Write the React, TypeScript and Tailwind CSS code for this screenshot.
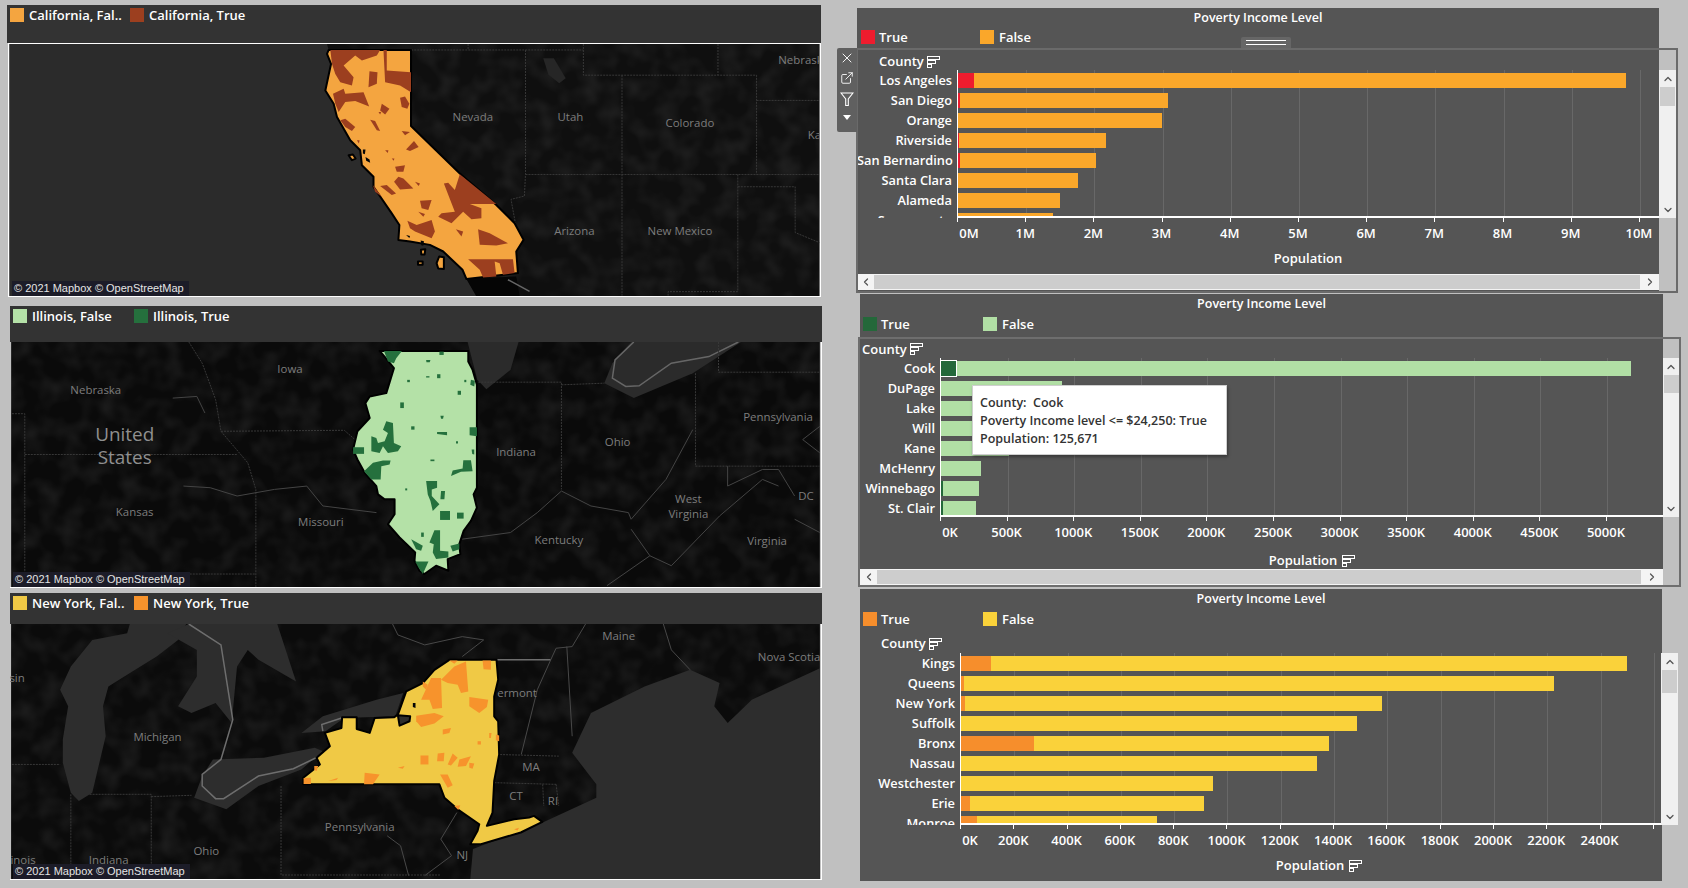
import React from "react";
import { ChevronUp, ChevronDown, ChevronLeft, ChevronRight, X, ExternalLink } from "lucide-react";

const S = "scale(0.5383 0.3333)";
const T = "scale(0.33333)";

function Polys({ items, fill }: { items: string[]; fill: string }) {
  return (
    <>
      {items.map((p, i) => (
        <polygon key={i} points={p} fill={fill} />
      ))}
    </>
  );
}

function Lines({ items, stroke = "#383838", dash = "2 1", w = 1 }: { items: string[]; stroke?: string; dash?: string; w?: number }) {
  return (
    <>
      {items.map((p, i) => (
        <polyline key={i} points={p} fill="none" stroke={stroke} strokeWidth={w} strokeDasharray={dash} vectorEffect="non-scaling-stroke" />
      ))}
    </>
  );
}

function Outline({ p, fill, w = 2 }: { p: string; fill: string; w?: number }) {
  return <polygon points={p} fill={fill} stroke="#000" strokeWidth={w} strokeLinejoin="round" vectorEffect="non-scaling-stroke" />;
}

function L({ x, y, t, big }: { x: number; y: number; t: string; big?: boolean }) {
  return (
    <text x={x} y={y + 1} textAnchor="middle" dominantBaseline="middle" fill={big ? "#8f8f8f" : "#7d7d7d"} fontSize={big ? 19 : 11.5} className="font-['Open_Sans',sans-serif]">
      {t}
    </text>
  );
}

function Mottle({ id, x, y, w, h }: { id: string; x: number; y: number; w: number; h: number }) {
  return (
    <>
      <filter id={id} x="0" y="0" width="100%" height="100%">
        <feTurbulence type="fractalNoise" baseFrequency="0.05" numOctaves="2" seed="7" />
        <feColorMatrix type="matrix" values="0 0 0 0 0.09  0 0 0 0 0.09  0 0 0 0 0.09  1.6 0 0 0 -0.62" />
      </filter>
      <rect x={x} y={y} width={w} height={h} filter={`url(#${id})`} opacity="0.3" />
    </>
  );
}

function Attribution() {
  return (
    <div className="absolute left-[3px] bottom-0 h-[15px] w-[177px] bg-[#1c1c28] text-[#e4e4e4] text-[11px] leading-[15px] pl-[2px] whitespace-nowrap font-['Liberation_Sans',sans-serif]">
      © 2021 Mapbox © OpenStreetMap
    </div>
  );
}

function Legend({ a, b, ca, cb, cls, secondCls }: { a: string; b: string; ca: string; cb: string; cls: string; secondCls: string }) {
  return (
    <div className={`flex items-start text-white font-semibold text-[13px] leading-[14px] ${cls}`}>
      <span className={`w-[14px] h-[14px] ${ca}`} />
      <span className={`ml-[5px] ${secondCls}`}>{a}</span>
      <span className={`w-[14px] h-[14px] ${cb}`} />
      <span className="ml-[5px]">{b}</span>
    </div>
  );
}

function CaliforniaMap() {
  return (
    <svg viewBox="8 44 813 253" className="block w-full h-full">
      <rect x="8" y="44" width="813" height="253" fill="#0f0f0f" />
      <Mottle id="m1" x={8} y={44} w={813} h={253} />
      <g transform={S}>
        <polygon points="1010,175 1030,175 1052,235 1040,250 1020,225" fill="#262626" />
        <Lines items={["764,150 1085,150", "870,132 870,150", "977,150 977,525 975,590 950,600 958,670", "1085,132 1085,226 1408,226 1408,525", "1336,132 1336,226", "1157,226 1157,890", "977,525 1525,525", "1373,525 1373,878 1243,878 1243,890", "1373,562 1480,562 1480,700 1525,730", "1408,302 1525,302"]} />
      </g>
      <g transform={`translate(320 44) ${T}`}>
        <polygon points="-936,0 20,0 25,18 20,30 32,60 15,140 40,180 50,220 90,290 120,320 125,365 160,400 160,430 215,510 238,545 235,590 270,595 330,605 370,625 428,680 440,708 470,760 -936,760" fill="#2b2b2b" />
        <polygon points="440,708 590,700 600,760 470,760" fill="#050505" />
        <polyline points="565,710 630,745" fill="none" stroke="#666" strokeWidth={1.5} vectorEffect="non-scaling-stroke" />
        <Outline p="25,18 273,18 273,247 420,390 530,485 585,540 612,590 590,625 595,690 440,708 428,680 370,625 330,605 270,595 235,590 238,545 215,510 160,430 160,400 125,365 120,320 90,290 50,220 40,180 15,140 32,60 20,30" fill="#f4a540" />
        <Outline p="85,335 98,333 106,345 95,350" fill="#f4a540" />
        <Outline p="303,620 316,618 314,634 304,634" fill="#f4a540" />
        <Outline p="294,655 308,655 308,665 294,665" fill="#f4a540" />
        <Outline p="358,640 372,642 372,678 355,676 350,660" fill="#f4a540" />
        <Polys fill="#050505" items={["128,318 136,318 134,332 128,330", "136,340 148,348 150,358 138,352", "258,575 270,578 268,584", "302,592 312,594 310,608 304,606"]} />
        <Polys
          fill="#9c3f1f"
          items={[
            "30,18 180,18 170,35 125,50 105,35 70,65 100,100 95,125 60,115 45,90 35,60",
            "190,18 200,18 200,80 273,85 273,145 240,125 195,115",
            "148,82 172,85 170,120 145,130",
            "38,150 70,135 75,150 130,145 147,188 105,172 75,175 55,205 45,180",
            "240,162 255,158 268,180 262,195 245,190",
            "185,180 208,195 195,212 180,200",
            "60,230 75,225 105,250 95,262 75,250",
            "150,228 165,232 180,262 170,260",
            "245,262 270,265 255,275",
            "282,292 296,310 270,322 258,318",
            "225,370 255,365 250,385 230,385",
            "235,400 250,405 280,435 240,438 222,415",
            "180,428 200,425 228,450 215,455",
            "300,472 335,470 325,500 305,495",
            "295,505 315,512 310,520",
            "420,392 530,482 450,482 485,495 485,525 455,528 430,505 395,540 355,520 365,510 405,505 395,480 372,420 385,418 405,440",
            "262,532 290,545 335,530 345,565 335,585 285,565 270,555",
            "475,558 510,570 565,600 530,607 480,605",
            "445,648 580,648 585,690 550,695 540,660 525,655 530,700 490,703 480,680",
            "408,558 430,565 425,580",
            "158,425 185,460 165,445",
            "110,290 118,290 116,300",
            "175,205 183,205 180,212",
            "195,320 205,320 203,328",
            "215,345 223,345 221,352",
            "285,415 300,420 296,428",
          ]}
        />
      </g>
      <L x={473} y={117} t="Nevada" />
      <L x={571} y={117} t="Utah" />
      <L x={691} y={123} t="Colorado" />
      <L x={802} y={60} t="Nebrask" />
      <L x={816} y={135} t="Ka" />
      <L x={575} y={232} t="Arizona" />
      <L x={681} y={232} t="New Mexico" />
    </svg>
  );
}

function IllinoisMap() {
  return (
    <svg viewBox="10 342 812 246" className="block w-full h-full">
      <rect x="10" y="342" width="812" height="246" fill="#0a0a0a" />
      <Mottle id="m2" x={10} y={342} w={812} h={246} />
      <g transform={`translate(0 300) ${S}`}>
        <polygon points="870,126 965,126 950,210 905,268 888,240" fill="#2b2b2b" />
        <polygon points="1175,126 1380,126 1290,220 1180,295 1125,250 1140,190" fill="#2b2b2b" />
        <polyline points="1180,126 1145,180 1140,235 1165,260 1190,258 1250,190 1320,170 1375,126" fill="none" stroke="#666" strokeWidth={1.5} vectorEffect="non-scaling-stroke" />
        <Lines items={["20,342 44,342 44,865", "44,465 440,465", "410,395 640,392 660,420", "350,126 375,190 400,300 410,395 460,490 475,570 475,865", "44,825 475,825", "890,247 1045,247 1045,570", "1045,255 1125,250", "1295,220 1295,500", "1338,126 1338,217 1527,217", "1295,500 1527,500"]} />
        <Lines dash="none" stroke="#444" items={["860,720 950,700 1000,640 1045,575 1100,620 1170,640 1175,660 1240,540 1290,390", "1175,690 1210,770 1130,860", "1210,770 1250,800 1340,650 1420,540 1450,560", "1355,500 1355,560 1420,510 1450,510 1480,590", "1527,380 1495,420 1527,460", "1480,660 1527,700", "320,295 365,290 380,340", "340,560 390,565 440,590 510,570 570,560 600,620 700,640"]} />
      </g>
      <g transform={`translate(345 345) ${T}`}>
        <Outline p="105,18 372,18 372,50 385,75 398,120 398,430 388,450 398,490 380,530 358,560 345,600 348,630 310,645 312,680 275,665 240,690 225,680 210,650 212,625 165,580 130,540 150,510 150,465 120,465 100,450 95,425 60,385 38,345 25,315 38,260 75,220 62,175 75,155 125,145 148,70 128,45" fill="#b4e1a7" />
        <Polys
          fill="#25703d"
          items={[
            "118,18 172,18 155,40 148,55 130,50",
            "285,20 298,20 298,30 285,30",
            "167,173 178,173 178,190 167,190",
            "125,230 145,235 148,295 170,305 160,320 130,325 115,305 105,325 80,320 80,275 95,280 100,295 120,290 130,265 115,255",
            "25,308 58,308 58,328 25,328",
            "85,355 115,348 138,348 135,360 110,365 108,405 80,405 58,380",
            "376,248 398,248 398,275 376,272",
            "278,262 308,262 308,272 278,268",
            "357,347 380,347 385,380 350,382 320,395 325,378 355,372",
            "245,410 278,410 278,430 262,435 262,455 285,480 265,500 258,470 250,450",
            "290,440 302,440 300,465 288,465",
            "287,500 317,500 317,527 287,527",
            "338,505 358,505 358,523 338,523",
            "270,558 287,558 287,620 312,622 312,640 275,645 265,625 268,600 255,595",
            "200,585 235,605 230,620 215,615",
            "318,605 345,598 345,615 325,622",
            "212,652 252,652 235,690 222,670",
            "340,138 350,138 350,150 340,150",
            "278,88 288,88 288,100 278,100",
            "245,94 255,94 255,98 245,98",
            "200,245 210,245 210,255 200,255",
            "288,213 298,213 296,222 290,222",
            "382,315 390,315 390,330 384,328",
            "258,345 270,345 270,350 258,350",
            "380,105 392,108 390,125 378,120",
            "360,105 366,105 366,112 360,112",
            "245,45 258,45 256,52 246,52",
            "188,105 196,105 196,112 188,112",
            "335,290 341,290 341,297 335,297",
            "182,432 188,432 188,438 182,438",
            "230,565 238,565 238,578 230,578",
          ]}
        />
      </g>
      <L x={290} y={369} t="Iowa" />
      <L x={95} y={390} t="Nebraska" />
      <L x={124} y={435} t="United" big />
      <L x={124} y={458} t="States" big />
      <L x={134} y={513} t="Kansas" />
      <L x={321} y={523} t="Missouri" />
      <L x={517} y={452} t="Indiana" />
      <L x={619} y={442} t="Ohio" />
      <L x={780} y={417} t="Pennsylvania" />
      <L x={690} y={500} t="West" />
      <L x={690} y={515} t="Virginia" />
      <L x={560} y={541} t="Kentucky" />
      <L x={769} y={542} t="Virginia" />
      <L x={808} y={497} t="DC" />
    </svg>
  );
}

function NewYorkMap() {
  return (
    <svg viewBox="10 624 812 256" className="block w-full h-full">
      <rect x="10" y="624" width="812" height="256" fill="#0b0b0b" />
      <Mottle id="m3" x={10} y={624} w={812} h={256} />
      <g transform={`translate(0 590) ${S}`}>
        <Polys
          fill="#2d2d2d"
          items={[
            "875,870 880,780 1010,700 1110,625 1110,585 1065,490 1100,370 1200,290 1285,240 1340,280 1330,350 1355,400 1400,330 1527,235 1527,870",
            "115,520 130,610 145,635 170,610 195,440 190,350 200,290 250,240 290,200 330,150 345,102 240,102 235,130 170,150 130,230 110,300 125,350 115,450",
            "350,102 515,102 550,275 480,210 460,180 440,230 430,400 400,340 355,370 330,350 365,260 365,180 310,130",
            "375,560 395,510 490,505 585,475 600,485 560,540 480,590 420,660 360,625",
            "560,430 600,380 700,330 750,310 735,380 640,385 605,425",
          ]}
        />
        <Lines dash="none" stroke="#6e6e6e" w={1.5} items={["350,102 410,165 432,390 410,510 375,555 375,590 400,628 415,628 480,560 545,538 600,495", "600,425 598,405 635,385", "925,210 1025,210"]} />
        <Lines items={["20,525 110,525", "130,615 130,870", "165,615 280,615 280,870", "280,622 355,618", "522,590 522,858 820,858", "925,495 1040,500", "920,580 1035,585", "1010,585 1012,650", "1035,585 1040,650"]} />
        <Lines dash="none" stroke="#484848" items={["850,670 820,750 840,800 790,860", "1025,210 1000,300 970,495", "1055,170 1065,440", "730,102 740,135 790,165 860,140 900,150 860,200", "1025,210 1035,175 1065,170 1090,102", "1235,102 1250,180 1285,240", "720,740 745,770 760,860"]} />
      </g>
      <g transform={`translate(295 650) ${T}`}>
        <Outline p="465,30 607,30 612,90 600,140 600,200 612,215 615,315 600,395 595,490 578,530 660,510 705,505 720,500 745,518 680,550 560,585 528,585 550,545 555,525 490,480 450,445 435,405 25,405 25,385 75,345 65,325 105,290 90,250 140,235 142,203 186,203 186,238 225,250 240,205 298,203 310,195 335,125 385,100 420,60" fill="#f0c945" />
        <Outline p="310,197 347,200 345,215 315,228" fill="#2d2d2d" />
        <polygon points="355,160 363,160 363,175 355,172" fill="#050505" />
        <Polys
          fill="#f7932c"
          items={[
            "465,32 490,32 480,42",
            "565,32 590,32 590,60 568,58",
            "480,50 515,35 522,125 500,130 490,105 460,100 440,90",
            "385,95 400,105 395,120 385,110",
            "410,85 440,85 443,175 415,178 405,150 380,150",
            "525,142 582,150 578,172 555,190 525,170",
            "365,198 420,190 448,200 420,222 380,232 365,215",
            "445,240 470,235 465,250 445,255",
            "378,318 402,318 402,345 378,345",
            "430,312 450,310 448,335 428,335",
            "475,312 490,325 470,348 460,345",
            "495,330 530,320 515,350 490,352",
            "525,340 540,342 535,358 525,355",
            "437,375 460,375 475,408 460,415",
            "210,370 255,375 235,405 208,405",
            "26,386 48,385 48,404 26,404",
            "58,350 70,350 65,365 58,362",
            "480,470 498,468 492,482",
            "605,255 615,258 615,275 605,272",
            "550,275 560,275 560,285 550,285",
            "585,250 592,250 590,265 585,265",
            "100,395 130,385 125,392",
            "310,355 330,350 325,358",
            "660,540 675,536 670,544",
          ]}
        />
      </g>
      <L x={16} y={678} t="sin" />
      <L x={157} y={737} t="Michigan" />
      <L x={620} y={636} t="Maine" />
      <L x={791} y={657} t="Nova Scotia" />
      <L x={518} y={693} t="ermont" />
      <L x={532} y={767} t="MA" />
      <L x={517} y={797} t="CT" />
      <L x={554} y={802} t="RI" />
      <L x={360} y={828} t="Pennsylvania" />
      <L x={206} y={852} t="Ohio" />
      <L x={463} y={856} t="NJ" />
      <L x={108} y={861} t="Indiana" />
      <L x={22} y={861} t="inois" />
    </svg>
  );
}

function SortIcon() {
  return (
    <svg width="13" height="13" viewBox="0 0 13 13" className="flex-none" fill="none" stroke="#fff" strokeWidth="1">
      <rect x="0.5" y="0.5" width="12" height="3" />
      <rect x="0.5" y="4.5" width="8" height="3" />
      <rect x="0.5" y="8.5" width="4" height="3" />
    </svg>
  );
}

function VScroll({ cls, thumb }: { cls: string; thumb: string }) {
  return (
    <div className={`flex-none flex flex-col items-center bg-[#f0f0f0] text-[#555] ${cls}`}>
      <div className="h-[17px] flex items-center">
        <ChevronUp size={12} strokeWidth={2.5} />
      </div>
      <div className={`w-[15px] bg-[#cdcdcd] ${thumb}`} />
      <div className="mt-auto h-[17px] flex items-center">
        <ChevronDown size={12} strokeWidth={2.5} />
      </div>
    </div>
  );
}

function HScroll({ thumb }: { thumb: string }) {
  return (
    <div className="flex h-[16px] items-stretch bg-[#f4f4f4] text-[#555] py-[1px]">
      <div className="w-[17px] flex items-center justify-center">
        <ChevronLeft size={12} strokeWidth={2.5} />
      </div>
      <div className={`bg-[#cdcdcd] ${thumb}`} />
      <div className="flex-1 flex items-center justify-center">
        <ChevronRight size={12} strokeWidth={2.5} />
      </div>
    </div>
  );
}

type Row = { n: string; t: number; e: number; sel?: boolean };

function Chart(props: {
  rows: Row[];
  step: number;
  ticks: string[];
  trueColor: string;
  falseColor: string;
  titleCls: string;
  legendCls: string;
  legendFirst: string;
  countyCls: string;
  plotCls: string;
  labelCls: string;
  axisCls: string;
  axisOffsetCls: string;
  firstTickCls: string;
  popCls: string;
  popIcon?: boolean;
  scrollCls: string;
  thumbCls: string;
}) {
  const { rows, step, ticks } = props;
  return (
    <>
      <div className={`flex items-center justify-center text-white font-semibold text-[12.5px] ${props.titleCls}`}>Poverty Income Level</div>
      <div className={`flex items-start text-white font-semibold text-[13px] leading-[14px] ${props.legendCls}`}>
        <span className={`w-[14px] h-[14px] ${props.trueColor}`} />
        <span className={`ml-[4px] ${props.legendFirst}`}>True</span>
        <span className={`w-[14px] h-[14px] ${props.falseColor}`} />
        <span className="ml-[5px]">False</span>
      </div>
      <div className={`flex items-center gap-[3px] text-white font-semibold text-[13px] ${props.countyCls}`}>
        <span>County</span>
        <SortIcon />
      </div>
      <div className={`flex ${props.plotCls}`}>
        <div className={`flex-none overflow-hidden pt-[3px] text-right text-white font-semibold text-[12.8px] ${props.labelCls}`}>
          {rows.map((r) => (
            <div key={r.n} className="h-[20px] leading-[15px] whitespace-nowrap">
              {r.n}
            </div>
          ))}
        </div>
        <div className="relative flex-1 min-w-0 overflow-hidden border-l border-b-2 border-white pt-[3px]">
          <div className="absolute inset-0 flex">
            {ticks.map((_, i) => (
              <div key={i} className="flex-none border-l border-[#686868] first:border-l-0" style={{ width: step }} />
            ))}
          </div>
          {rows.map((r) => (
            <div key={r.n} className="relative flex h-[15px] mb-[5px]">
              {r.t > 0 && (
                <div className={r.sel ? `${props.trueColor} border border-white -my-[1px] -ml-[1px]` : props.trueColor} style={{ width: r.t }} />
              )}
              <div className={props.falseColor} style={{ width: r.e - r.t }} />
            </div>
          ))}
        </div>
        <VScroll cls={props.scrollCls} thumb={props.thumbCls} />
      </div>
      <div className={`flex text-white font-semibold text-[13px] leading-[17px] ${props.axisCls} ${props.axisOffsetCls}`}>
        {ticks.map((t, i) => (
          <div key={i} className="flex-none" style={{ width: step }}>
            <div className="w-px h-[4px] bg-white" />
            <div className={i === 0 ? `w-0 flex justify-center mt-[3px] ${props.firstTickCls}` : "w-0 flex justify-center mt-[3px]"}>
              <span className="whitespace-nowrap">{t}</span>
            </div>
          </div>
        ))}
      </div>
      <div className={`flex items-center justify-center gap-[5px] text-white font-semibold text-[13px] ${props.popCls}`}>
        <span>Population</span>
        {props.popIcon && <SortIcon />}
      </div>
    </>
  );
}

const caRows: Row[] = [
  { n: "Los Angeles", t: 16, e: 668 },
  { n: "San Diego", t: 2, e: 210 },
  { n: "Orange", t: 0, e: 204 },
  { n: "Riverside", t: 1, e: 148 },
  { n: "San Bernardino", t: 2, e: 138 },
  { n: "Santa Clara", t: 0, e: 120 },
  { n: "Alameda", t: 0, e: 102 },
  { n: "Sacramento", t: 0, e: 95 },
];
const ilRows: Row[] = [
  { n: "Cook", t: 17, e: 691, sel: true },
  { n: "DuPage", t: 0, e: 121 },
  { n: "Lake", t: 0, e: 94 },
  { n: "Will", t: 0, e: 92 },
  { n: "Kane", t: 0, e: 68 },
  { n: "McHenry", t: 0, e: 40 },
  { n: "Winnebago", t: 2, e: 38 },
  { n: "St. Clair", t: 2, e: 35 },
];
const nyRows: Row[] = [
  { n: "Kings", t: 30, e: 666 },
  { n: "Queens", t: 3, e: 593 },
  { n: "New York", t: 4, e: 421 },
  { n: "Suffolk", t: 0, e: 396 },
  { n: "Bronx", t: 73, e: 368 },
  { n: "Nassau", t: 0, e: 356 },
  { n: "Westchester", t: 0, e: 252 },
  { n: "Erie", t: 9, e: 243 },
  { n: "Monroe", t: 16, e: 196 },
];

export default function App() {
  return (
    <div className="w-[1688px] h-[888px] overflow-hidden bg-[#c0c0c0] flex font-['Open_Sans',sans-serif]">
      <div className="w-[830px] flex-none flex flex-col pt-[5px]">
        <div className="ml-[7px] w-[814px] h-[292px] flex flex-col">
          <div className="h-[38px] bg-[#333333]">
            <Legend a="California, Fal.." b="California, True" ca="bg-[#f4a540]" cb="bg-[#9c3f1f]" cls="pt-[3px] pl-[3px]" secondCls="w-[101px]" />
          </div>
          <div className="relative flex-1 ml-[1px] border border-white overflow-hidden">
            <CaliforniaMap />
            <Attribution />
          </div>
        </div>
        <div className="ml-[10px] mt-[9px] w-[812px] h-[282px] flex flex-col">
          <div className="h-[36px] bg-[#333333]">
            <Legend a="Illinois, False" b="Illinois, True" ca="bg-[#b4e1a7]" cb="bg-[#25703d]" cls="pt-[3px] pl-[3px]" secondCls="w-[102px]" />
          </div>
          <div className="relative flex-1 border-b border-r border-white overflow-hidden">
            <IllinoisMap />
            <Attribution />
          </div>
        </div>
        <div className="ml-[10px] mt-[5px] w-[812px] h-[287px] flex flex-col">
          <div className="h-[31px] bg-[#333333]">
            <Legend a="New York, Fal.." b="New York, True" ca="bg-[#f0c945]" cb="bg-[#f7932c]" cls="pt-[3px] pl-[3px]" secondCls="w-[102px]" />
          </div>
          <div className="relative flex-1 border-b border-r border-white overflow-hidden">
            <NewYorkMap />
            <Attribution />
          </div>
        </div>
      </div>

      <div className="flex-1 flex flex-col pt-[8px]">
        <div className="relative ml-[27px] w-[802px] h-[285px] bg-[#555555]">
          <Chart
            rows={caRows}
            step={68.2}
            ticks={["0M", "1M", "2M", "3M", "4M", "5M", "6M", "7M", "8M", "9M", "10M"]}
            trueColor="bg-[#ee1c2e]"
            falseColor="bg-[#faa72a]"
            titleCls="h-[20px]"
            legendCls="h-[22px] pt-[2px] pl-[4px]"
            legendFirst="w-[101px]"
            countyCls="h-[20px] pt-[4px] pl-[22px]"
            plotCls="h-[148px] -mr-[17px]"
            labelCls="w-[100px] pr-[5px]"
            axisCls="h-[29px]"
            axisOffsetCls="pl-[100px]"
            firstTickCls="ml-[12px]"
            popCls="h-[27px] pl-[100px] pb-[3px]"
            scrollCls="w-[17px]"
            thumbCls="h-[19px]"
          />
          <HScroll thumb="w-[766px]" />
          <div className="absolute -left-[1px] top-[40px] w-[822px] h-[245px] border-2 border-[#6a6a6a] pointer-events-none" />
          <div className="absolute -left-[20px] top-[40px] w-[20px] h-[84px] bg-[#606060] rounded-l-[2px] flex flex-col items-center text-white">
            <X size={16} strokeWidth={1.4} className="mt-[2px]" />
            <ExternalLink size={14} strokeWidth={1.5} className="mt-[5px]" />
            <svg width="14" height="14" viewBox="0 0 14 14" fill="none" stroke="#fff" strokeWidth="1.1" className="mt-[7px]">
              <path d="M1 1h12L8.3 7v6.5H5.7V7z" />
            </svg>
            <svg width="8" height="5" viewBox="0 0 8 5" fill="#fff" className="mt-[9px]">
              <path d="M0 0h8L4 5z" />
            </svg>
          </div>
          <div className="absolute left-[384px] top-[29px] w-[50px] h-[11px] bg-[#666666] rounded-t-[2px] flex flex-col items-center pt-[3px] gap-[3px]">
            <div className="w-[40px] h-px bg-white" />
            <div className="w-[40px] h-px bg-white" />
          </div>
        </div>

        <div className="relative ml-[30px] mt-px w-[803px] h-[293px] bg-[#555555]">
          <Chart
            rows={ilRows}
            step={66.6}
            ticks={["0K", "500K", "1000K", "1500K", "2000K", "2500K", "3000K", "3500K", "4000K", "4500K", "5000K"]}
            trueColor="bg-[#24683a]"
            falseColor="bg-[#b1dfa5]"
            titleCls="h-[20px]"
            legendCls="h-[23px] pt-[3px] pl-[3px]"
            legendFirst="w-[102px]"
            countyCls="h-[21px] pt-[4px] pl-[2px]"
            plotCls="h-[159px] -mr-[16px]"
            labelCls="w-[80px] pr-[5px]"
            axisCls="h-[33px]"
            axisOffsetCls="pl-[80px]"
            firstTickCls="ml-[10px]"
            popCls="h-[19px] pl-[101px] pt-[3px]"
            popIcon
            scrollCls="w-[16px]"
            thumbCls="h-[18px]"
          />
          <HScroll thumb="w-[764px]" />
          <div className="absolute -left-[2px] top-[43px] w-[823px] h-[250px] border-2 border-[#6e6e6e] pointer-events-none" />
          <div className="absolute left-[112px] top-[91px] w-[255px] h-[70px] bg-white border border-[#cfcfcf] shadow-[1px_2px_3px_rgba(0,0,0,0.35)] pl-[7px] pt-[8px] text-[#333333] font-semibold text-[12.5px] leading-[18px]">
            <div className="whitespace-pre">County:  Cook</div>
            <div className="whitespace-nowrap">Poverty Income level &lt;= $24,250: True</div>
            <div className="whitespace-nowrap">Population: 125,671</div>
          </div>
        </div>

        <div className="relative ml-[30px] mt-[2px] w-[802px] h-[292px] bg-[#555555]">
          <Chart
            rows={nyRows}
            step={53.3}
            ticks={["0K", "200K", "400K", "600K", "800K", "1000K", "1200K", "1400K", "1600K", "1800K", "2000K", "2200K", "2400K", ""]}
            trueColor="bg-[#f68e2c]"
            falseColor="bg-[#fad23a]"
            titleCls="h-[20px]"
            legendCls="h-[23px] pt-[3px] pl-[3px]"
            legendFirst="w-[102px]"
            countyCls="h-[21px] pt-[3px] pl-[21px]"
            plotCls="h-[172px] -mr-[16px]"
            labelCls="w-[100px] pr-[5px]"
            axisCls="h-[33px]"
            axisOffsetCls="pl-[100px]"
            firstTickCls="ml-[10px]"
            popCls="h-[23px] pl-[116px] pb-[7px]"
            popIcon
            scrollCls="w-[17px]"
            thumbCls="h-[23px]"
          />
        </div>
      </div>
    </div>
  );
}
